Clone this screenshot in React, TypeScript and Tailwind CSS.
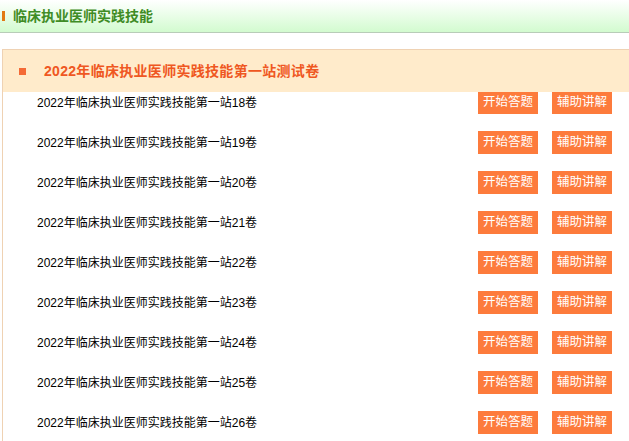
const papers = [18, 19, 20, 21, 22, 23, 24, 25, 26];

function PaperRow({ no }: { no: number }) {
  return (
    <div className="flex h-[40px] items-start pl-[34px] pr-[17px]">
      <div className="flex h-[23px] flex-1 items-center text-[12px] leading-none text-black">
        2022年临床执业医师实践技能第一站{no}卷
      </div>
      <div className="flex gap-[14px]">
        <button
          type="button"
          className="flex h-[23px] w-[60px] items-center justify-center bg-[#fd7b3c] text-[12.5px] leading-none text-white"
        >
          开始答题
        </button>
        <button
          type="button"
          className="flex h-[23px] w-[60px] items-center justify-center bg-[#fd7b3c] text-[12.5px] leading-none text-white"
        >
          辅助讲解
        </button>
      </div>
    </div>
  );
}

export default function App() {
  return (
    <div className="h-[441px] w-[629px] overflow-hidden bg-white font-['Liberation_Sans','Noto_Sans_CJK_SC',sans-serif]">
      <div className="flex h-[33px] items-center border-b border-[#b8ccb8] bg-gradient-to-b from-white to-[#d2fbcf]">
        <span className="ml-[2px] h-[10px] w-[3px] bg-[#e27a12]" />
        <span className="ml-[8px] text-[14px] font-bold leading-none text-[#3f8c25]">
          临床执业医师实践技能
        </span>
      </div>

      <div className="ml-[2px] mt-[16px] border-l border-t border-[#efd2b3]">
        <div className="relative z-10 flex h-[42px] items-center bg-[#ffebcb]">
          <span className="ml-[16px] h-[7px] w-[7px] bg-[#f46a36]" />
          <span className="ml-[18px] text-[14px] font-bold leading-none tracking-[0.3px] text-[#ef5722]">
            2022年临床执业医师实践技能第一站测试卷
          </span>
        </div>
        <div className="-mt-[1px]">
          {papers.map((n) => (
            <PaperRow key={n} no={n} />
          ))}
        </div>
      </div>
    </div>
  );
}
